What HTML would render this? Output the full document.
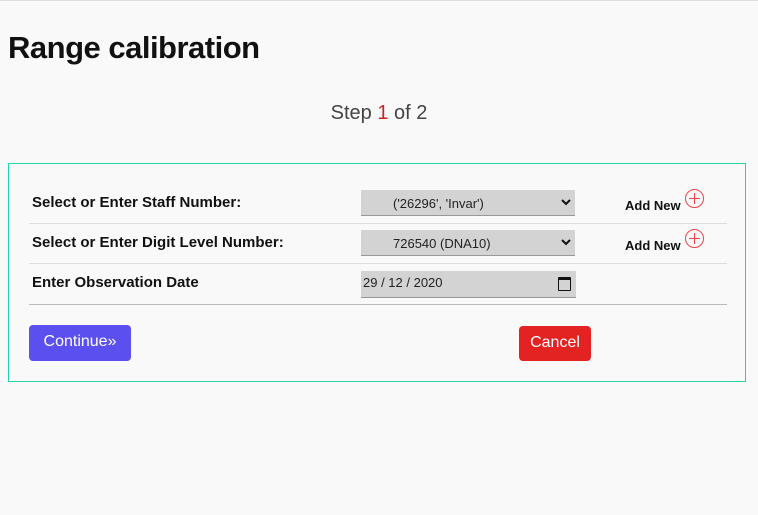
<!DOCTYPE html>
<html><head><style>
body{margin:0;width:758px;height:515px;background:#f9f9f9;font-family:"Liberation Sans",sans-serif;position:relative;overflow:hidden}
.a{position:absolute}
h1{position:absolute;left:8px;top:30px;margin:0;font-size:31px;font-weight:bold;color:#111;letter-spacing:-0.5px}
.step{left:0;width:758px;text-align:center;top:102px;font-size:20px;color:#444}
.box{left:8px;top:163px;width:738px;height:219px;border:1px solid #27d4a8;box-sizing:border-box}
.lbl{left:32px;font-size:15px;font-weight:bold;color:#111}
.line{left:29px;width:698px;height:1px;background:#ddd}
.sel{left:361px;width:214px;height:26px;background:#d3d3d3;border-bottom:1px solid #999;box-sizing:border-box;font-size:13px;color:#222}
.add{left:625px;font-size:13px;font-weight:bold;color:#111}
.plus{width:19px;height:19px;border:1.3px solid #e44;border-radius:50%;box-sizing:border-box}
.plus:before,.plus:after{content:"";position:absolute;background:#e44;left:50%;top:50%}
.plus:before{width:11px;height:1.3px;margin:-0.6px 0 0 -5.5px}
.plus:after{width:1.3px;height:11px;margin:-5.5px 0 0 -0.6px}
.btn{height:36px;border-radius:4px;color:#fff;font-size:16px;line-height:34px;text-align:center}
</style></head><body>
<div class="a" style="left:0;top:0;width:758px;height:1px;background:#ddd"></div>
<h1>Range calibration</h1>
<div class="a step">Step <span style="color:#c22">1</span> of 2</div>
<div class="a box"></div>
<div class="a lbl" style="top:194px">Select or Enter Staff Number:</div>
<div class="a lbl" style="top:234px">Select or Enter Digit Level Number:</div>
<div class="a lbl" style="top:274px">Enter Observation Date</div>
<div class="a line" style="top:223px"></div>
<div class="a line" style="top:263px"></div>
<div class="a line" style="top:304px;background:#bbb"></div>
<div class="a sel" style="top:190px"><span class="a" style="left:32px;top:6px">('26296', 'Invar')</span><svg class="a" style="right:4px;top:8px" width="10" height="8"><path d="M1 2 L5 6 L9 2" stroke="#111" stroke-width="2" fill="none"/></svg></div>
<div class="a sel" style="top:230px"><span class="a" style="left:32px;top:6px">726540 (DNA10)</span><svg class="a" style="right:4px;top:8px" width="10" height="8"><path d="M1 2 L5 6 L9 2" stroke="#111" stroke-width="2" fill="none"/></svg></div>
<div class="a sel" style="top:271px;width:215px;height:27px"><span class="a" style="left:2px;top:4px">29 / 12 / 2020</span><span class="a" style="right:5px;top:6px;width:11px;height:10px;border:1.5px solid #111;border-top-width:3px;border-radius:1px"></span></div>
<div class="a add" style="top:198px">Add New</div>
<div class="a add" style="top:238px">Add New</div>
<div class="a plus" style="left:685px;top:189px"></div>
<div class="a plus" style="left:685px;top:229px"></div>
<div class="a btn" style="left:29px;top:325px;width:102px;background:#5b4ff0">Continue&raquo;</div>
<div class="a btn" style="left:519px;top:326px;width:72px;height:35px;background:#e32222">Cancel</div>
</body></html>
